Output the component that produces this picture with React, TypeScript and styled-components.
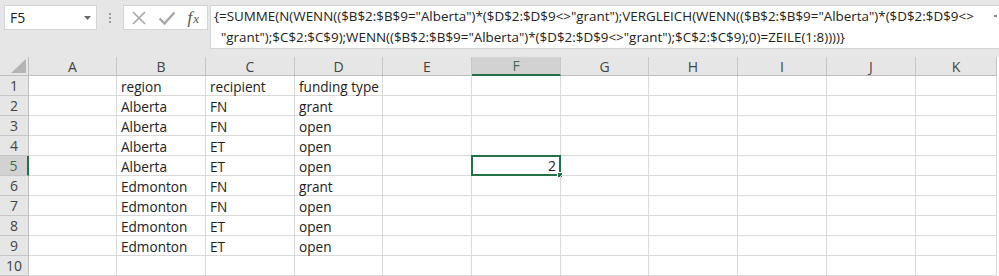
import styled, {createGlobalStyle} from 'styled-components';

const GlobalStyle = createGlobalStyle`
  html, body {
    margin: 0;
    padding: 0;
    background: #e6e6e6;
  }
  * {
    box-sizing: border-box;
  }
`;

const columns = ['A', 'B', 'C', 'D', 'E', 'F', 'G', 'H', 'I', 'J', 'K'];
const columnWidths = [88, 89, 89, 88, 89, 89, 88, 89, 89, 89, 81];

const data: Record<number, string[]> = {
  1: ['', 'region', 'recipient', 'funding type'],
  2: ['', 'Alberta', 'FN', 'grant'],
  3: ['', 'Alberta', 'FN', 'open'],
  4: ['', 'Alberta', 'ET', 'open'],
  5: ['', 'Alberta', 'ET', 'open'],
  6: ['', 'Edmonton', 'FN', 'grant'],
  7: ['', 'Edmonton', 'FN', 'open'],
  8: ['', 'Edmonton', 'ET', 'open'],
  9: ['', 'Edmonton', 'ET', 'open'],
  10: [],
};

const formulaLine1 =
  '{=SUMME(N(WENN(($B$2:$B$9="Alberta")*($D$2:$D$9<>"grant");VERGLEICH(WENN(($B$2:$B$9="Alberta")*($D$2:$D$9<>';
const formulaLine2 =
  '"grant");$C$2:$C$9);WENN(($B$2:$B$9="Alberta")*($D$2:$D$9<>"grant");$C$2:$C$9);0)=ZEILE(1:8))))}';

function App() {
  return (
    <Page>
      <GlobalStyle />
      <FormulaBar>
        <NameBox>
          <span>F5</span>
          <DropArrow>
            <svg width="7" height="4" viewBox="0 0 7 4">
              <path d="M0 0 L7 0 L3.5 4 Z" fill="#666" />
            </svg>
          </DropArrow>
        </NameBox>
        <Grip>
          <i />
          <i />
          <i />
        </Grip>
        <ButtonBox>
          <svg width="16" height="16" viewBox="0 0 16 16">
            <path
              d="M2 2 L14 14 M14 2 L2 14"
              stroke="#a6a6a6"
              strokeWidth="1.6"
              fill="none"
            />
          </svg>
          <svg width="18" height="16" viewBox="0 0 18 16">
            <path
              d="M1.5 8.5 L6.5 13.5 L16.5 2.5"
              stroke="#a6a6a6"
              strokeWidth="2.4"
              fill="none"
            />
          </svg>
          <FxLabel>
            f<sub>x</sub>
          </FxLabel>
        </ButtonBox>
        <FormulaBox>
          <FormulaLine>{formulaLine1}</FormulaLine>
          <FormulaLine $indent>{formulaLine2}</FormulaLine>
          <ExpandMark />
        </FormulaBox>
      </FormulaBar>

      <Sheet>
        <Corner>
          <svg width="15" height="14" viewBox="0 0 15 14">
            <path d="M15 0 L15 14 L0 14 Z" fill="#b4b4b4" />
          </svg>
        </Corner>
        {columns.map(col => (
          <ColHeader key={col} $active={col === 'F'}>
            {col}
          </ColHeader>
        ))}
        {Object.keys(data).map(key => {
          const row = Number(key);
          return [
            <RowHeader key={`h${row}`} $active={row === 5}>
              {row}
            </RowHeader>,
            ...columns.map((col, i) => (
              <Cell key={`${col}${row}`}>
                {data[row][i] ?? ''}
                {col === 'F' && row === 5 && (
                  <Selection>
                    <SelectedValue>2</SelectedValue>
                    <FillHandle />
                  </Selection>
                )}
              </Cell>
            )),
          ];
        })}
      </Sheet>
    </Page>
  );
}

const Page = styled.div`
  width: 999px;
  height: 276px;
  overflow: hidden;
  background: #e6e6e6;
  font-family: 'Open Sans', 'Liberation Sans', sans-serif;
`;

const FormulaBar = styled.div`
  display: flex;
  align-items: flex-start;
  height: 57px;
  padding: 5px 0 0 4px;
`;

const NameBox = styled.div`
  width: 93px;
  height: 25px;
  background: #fff;
  border: 1px solid #d4d4d4;
  display: flex;
  align-items: center;
  justify-content: space-between;
  padding: 0 5px 0 5px;
  font-size: 14px;
  color: #222;
`;

const DropArrow = styled.span`
  display: flex;
  align-items: center;
  margin-top: 1px;
`;

const Grip = styled.div`
  width: 26px;
  height: 25px;
  display: flex;
  flex-direction: column;
  align-items: center;
  justify-content: center;
  gap: 2px;
  i {
    width: 2px;
    height: 2px;
    background: #9a9a9a;
  }
`;

const ButtonBox = styled.div`
  width: 85px;
  height: 25px;
  background: #fff;
  border: 1px solid #d4d4d4;
  display: flex;
  align-items: center;
  justify-content: space-between;
  padding: 0 8px 0 7px;
`;

const FxLabel = styled.span`
  font-family: 'Liberation Serif', 'DejaVu Serif', serif;
  font-style: italic;
  font-size: 17px;
  color: #555;
  line-height: 1;
  sub {
    font-size: 13px;
    vertical-align: baseline;
    margin-left: 1px;
  }
`;

const FormulaBox = styled.div`
  position: relative;
  flex: 1;
  height: 44px;
  margin-left: 2px;
  background: #fff;
  border: 1px solid #d4d4d4;
  border-right: none;
  padding: 0 0 0 3px;
`;

const FormulaLine = styled.div<{$indent?: boolean}>`
  font-size: 13.4px;
  line-height: 21px;
  color: #222;
  white-space: pre;
  padding-left: ${p => (p.$indent ? '7px' : '0')};
`;

const ExpandMark = styled.span`
  position: absolute;
  right: 2px;
  top: 9px;
  width: 3px;
  height: 2px;
  background: #888;
`;

const Sheet = styled.div`
  display: grid;
  grid-template-columns: 29px ${columnWidths.map(w => `${w}px`).join(' ')};
  grid-template-rows: 19px repeat(10, 20px);
  background: #fff;
  font-size: 13.6px;
  color: #222;
`;

const Corner = styled.div`
  background: #e6e6e6;
  border-right: 1px solid #bdbdbd;
  border-bottom: 1px solid #bdbdbd;
  display: flex;
  align-items: flex-end;
  justify-content: flex-end;
  padding: 0 2px 2px 0;
`;

const ColHeader = styled.div<{$active?: boolean}>`
  background: ${p => (p.$active ? '#d2d2d2' : '#e6e6e6')};
  color: ${p => (p.$active ? '#3e6e50' : '#444')};
  border-right: 1px solid #c6c6c6;
  border-bottom: ${p => (p.$active ? '2px solid #217346' : '1px solid #bdbdbd')};
  display: flex;
  align-items: center;
  justify-content: center;
  font-size: 14px;
`;

const RowHeader = styled.div<{$active?: boolean}>`
  background: ${p => (p.$active ? '#d2d2d2' : '#e6e6e6')};
  color: ${p => (p.$active ? '#3e6e50' : '#444')};
  border-bottom: 1px solid #c6c6c6;
  border-right: ${p => (p.$active ? '2px solid #217346' : '1px solid #bdbdbd')};
  display: flex;
  align-items: center;
  justify-content: center;
  font-size: 14px;
`;

const Cell = styled.div`
  position: relative;
  border-right: 1px solid #dadada;
  border-bottom: 1px solid #dadada;
  padding: 1px 4px 0;
  display: flex;
  align-items: center;
  white-space: nowrap;
`;

const Selection = styled.div`
  position: absolute;
  left: -1px;
  top: -1px;
  right: -1px;
  bottom: -1px;
  border: 2px solid #217346;
  display: flex;
  align-items: center;
  justify-content: flex-end;
  padding-right: 3px;
`;

const SelectedValue = styled.span`
  font-size: 14px;
`;

const FillHandle = styled.span`
  position: absolute;
  right: -4px;
  bottom: -4px;
  width: 6px;
  height: 6px;
  background: #217346;
  border: 1px solid #fff;
`;

export default App;
